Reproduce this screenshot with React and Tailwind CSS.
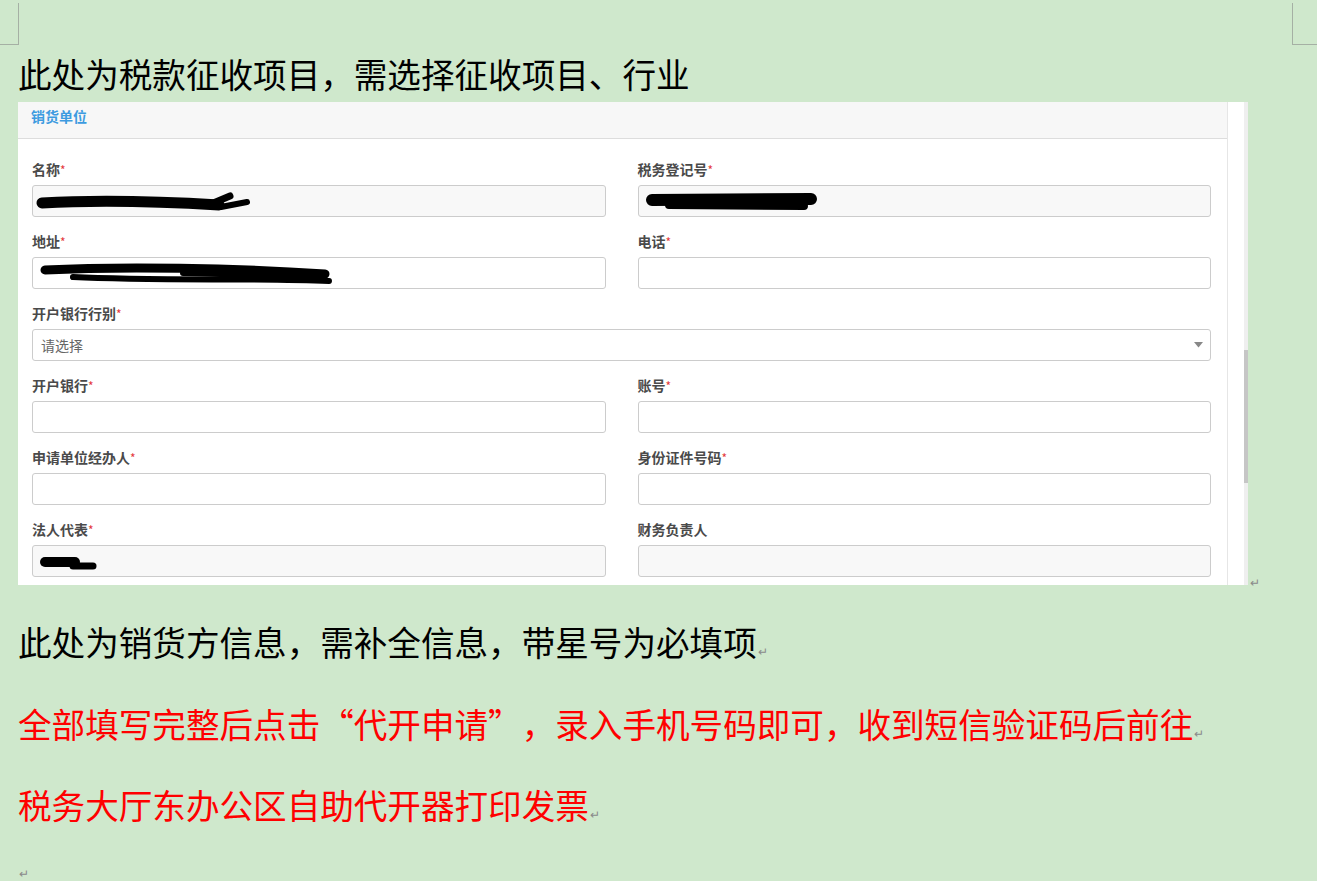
import React from "react";

const Scribble = ({ w, h, paths }) => (
  <svg width={w} height={h} viewBox={`0 0 ${w} ${h}`} className="block">
    {paths.map((p, i) => (
      <path
        key={i}
        d={p.d}
        stroke="#000"
        strokeWidth={p.sw}
        strokeLinecap="round"
        strokeLinejoin="round"
        fill="none"
      />
    ))}
  </svg>
);

const scribbles = {
  name: (
    <Scribble
      w={230}
      h={32}
      paths={[
        { d: "M9 18 C60 15, 120 16, 186 20", sw: 11 },
        { d: "M178 19 L197 11", sw: 7 },
        { d: "M188 22 L214 17", sw: 6 },
      ]}
    />
  ),
  tax: (
    <Scribble
      w={190}
      h={32}
      paths={[
        { d: "M13 15 L172 14", sw: 12 },
        { d: "M30 20 L165 21", sw: 8 },
      ]}
    />
  ),
  addr: (
    <Scribble
      w={310}
      h={32}
      paths={[
        { d: "M12 13 C90 9, 200 11, 292 17", sw: 9 },
        { d: "M40 20 C120 24, 220 21, 296 24", sw: 6 },
        { d: "M150 16 L290 20", sw: 6 },
      ]}
    />
  ),
  legal: (
    <Scribble
      w={80}
      h={32}
      paths={[
        { d: "M12 17 L42 17", sw: 10 },
        { d: "M40 21 L60 21", sw: 7 },
      ]}
    />
  ),
};

const Field = ({ label, required, filled, content }) => (
  <div>
    <div className="h-[18px] text-[14px] leading-[18px] font-bold text-[#4a4a4a]">
      {label}
      {required && <span className="text-[12px] font-normal text-[#e4393c]">*</span>}
    </div>
    <div
      className={`mt-[7px] flex h-[32px] items-center rounded-[3px] border border-[#cccccc] ${
        filled ? "bg-[#f8f8f8]" : "bg-white"
      }`}
    >
      {content}
    </div>
  </div>
);

const Select = () => (
  <div className="col-span-2">
    <div className="h-[18px] text-[14px] leading-[18px] font-bold text-[#4a4a4a]">
      开户银行行别<span className="text-[12px] font-normal text-[#e4393c]">*</span>
    </div>
    <div className="mt-[7px] flex h-[32px] items-center justify-between rounded-[3px] border border-[#cccccc] bg-white pl-[8px] pr-[7px]">
      <span className="text-[14px] text-[#666]">请选择</span>
      <svg width="9" height="6" viewBox="0 0 9 6">
        <path d="M0 0 L9 0 L4.5 5.5 Z" fill="#888" />
      </svg>
    </div>
  </div>
);

const Screenshot = () => (
  <div className="flex h-[483px] w-[1230px] overflow-hidden bg-white">
    <div className="w-[1210px] border-r border-[#e6e6e6]">
      <div className="h-[37px] border-b border-[#dddddd] bg-[#f7f7f7] pl-[13px] pt-[4px] text-[14px] leading-[20px] font-bold text-[#3d9be0]">
        销货单位
      </div>
      <div className="grid grid-cols-2 gap-x-[32px] gap-y-[15px] pl-[14px] pr-[16px] pt-[21px]">
        <Field label="名称" required filled content={scribbles.name} />
        <Field label="税务登记号" required filled content={scribbles.tax} />
        <Field label="地址" required content={scribbles.addr} />
        <Field label="电话" required />
        <Select />
        <Field label="开户银行" required />
        <Field label="账号" required />
        <Field label="申请单位经办人" required />
        <Field label="身份证件号码" required />
        <Field label="法人代表" required filled content={scribbles.legal} />
        <Field label="财务负责人" filled />
      </div>
    </div>
    <div className="w-[16px] bg-white" />
    <div className="w-[4px] bg-[#efefef] pt-[248px]">
      <div className="h-[133px] bg-[#c6c6c6]" />
    </div>
  </div>
);

const Mark = () => (
  <span className="ml-[1px] text-[12px] leading-none text-[#8a8a8a]">↵</span>
);

export default function App() {
  return (
    <div className="min-h-screen w-full overflow-hidden bg-[#cfe8cc] font-['Noto_Sans_CJK_SC',sans-serif] [text-spacing-trim:space-all]">
      <div className="flex justify-between pt-[3px]">
        <div className="h-[42px] w-[19px] border-r border-b border-[#a5b0a4]" />
        <div className="h-[42px] w-[25px] border-l border-b border-[#a5b0a4]" />
      </div>

      <p className="mt-[5px] pl-[18px] text-[33.6px] leading-[48px] text-black">
        此处为税款征收项目，需选择征收项目、行业
      </p>

      <div className="mt-[4px] flex items-end pl-[18px]">
        <Screenshot />
        <span className="ml-[2px] mb-[-3px] text-[12px] leading-none text-[#8a8a8a]">↵</span>
      </div>

      <p className="mt-[33px] pl-[18px] text-[33.6px] leading-[48px] text-black">
        此处为销货方信息，需补全信息，带星号为必填项
        <Mark />
      </p>

      <p className="mt-[34px] pl-[18px] text-[33.6px] leading-[48px] text-[#ff0000]">
        全部填写完整后点击“代开申请”，录入手机号码即可，收到短信验证码后前往
        <Mark />
      </p>

      <p className="mt-[33px] pl-[18px] text-[33.6px] leading-[48px] text-[#ff0000]">
        税务大厅东办公区自助代开器打印发票
        <Mark />
      </p>

      <p className="mt-[38px] pl-[19px] text-[12px] leading-none text-[#8a8a8a]">↵</p>
    </div>
  );
}
